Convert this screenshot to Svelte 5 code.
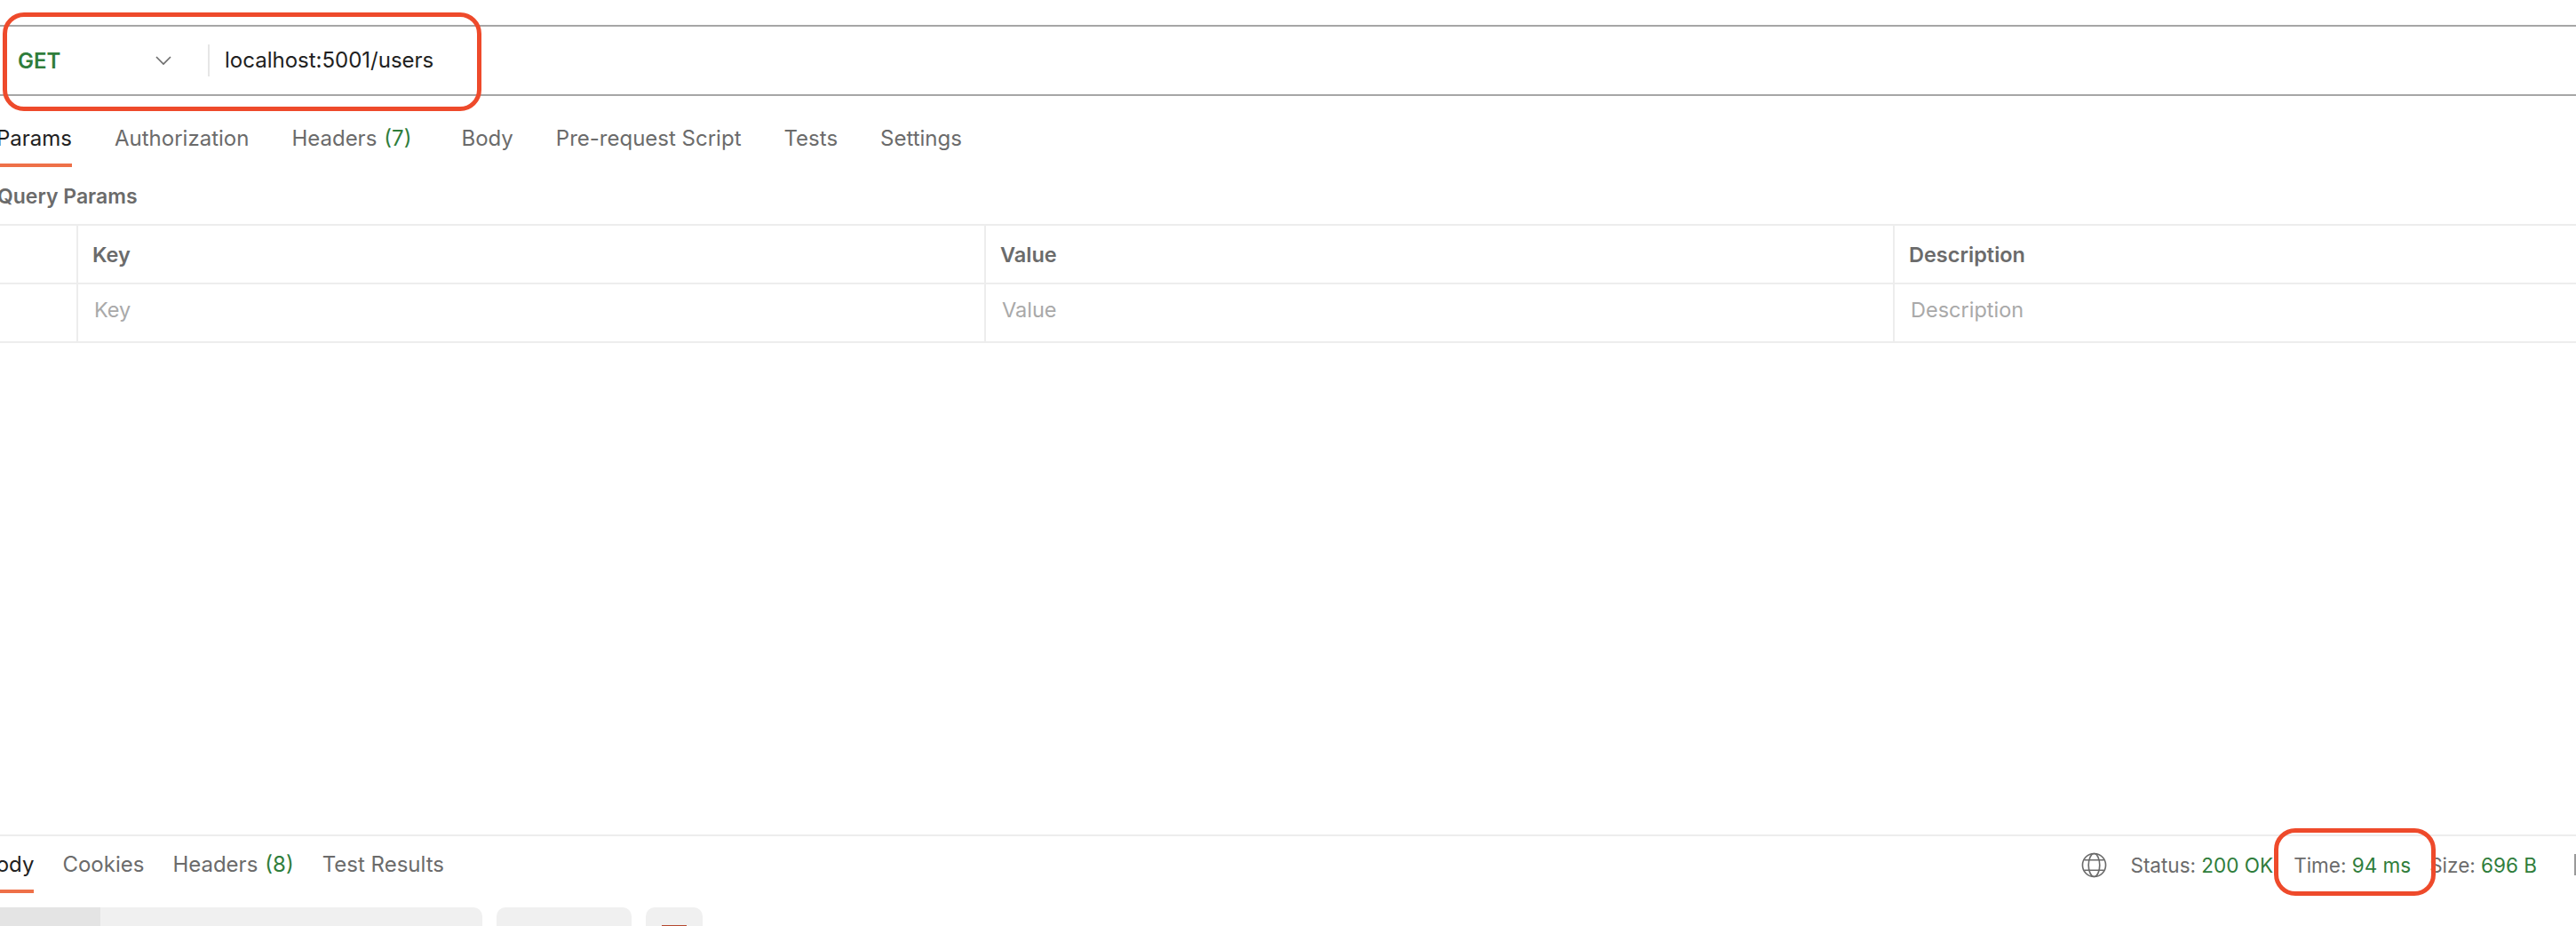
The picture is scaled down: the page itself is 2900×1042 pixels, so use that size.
<script>
  const reqTabs = [
    { label: 'Params', active: true },
    { label: 'Authorization' },
    { label: 'Headers', count: '(7)' },
    { label: 'Body' },
    { label: 'Pre-request Script' },
    { label: 'Tests' },
    { label: 'Settings' }
  ];
  const resTabs = [
    { label: 'Body', active: true },
    { label: 'Cookies' },
    { label: 'Headers', count: '(8)' },
    { label: 'Test Results' }
  ];
</script>

<div class="page">
  <div class="urlbar">
    <div class="method">
      <span class="verb">GET</span>
      <svg class="chev" width="18" height="11" viewBox="0 0 18 11"><path d="M1 1l8 8 8-8" fill="none" stroke="#6b6b6b" stroke-width="1.6"/></svg>
    </div>
    <div class="url">localhost:5001/users</div>
    <div class="mark mark-url"></div>
  </div>

  <nav class="tabs req">
    {#each reqTabs as t}
      <span class="tab" class:active={t.active}>{t.label}{#if t.count}<span class="count">{t.count}</span>{/if}</span>
    {/each}
  </nav>

  <div class="qp">Query Params</div>

  <div class="table">
    <div class="row head">
      <div class="c0"></div><div class="c1">Key</div><div class="c2">Value</div><div class="c3">Description</div>
    </div>
    <div class="row ph">
      <div class="c0"></div><div class="c1">Key</div><div class="c2">Value</div><div class="c3">Description</div>
    </div>
  </div>

  <div class="spacer"></div>

  <div class="response">
    <nav class="tabs res">
      {#each resTabs as t}
        <span class="tab" class:active={t.active}>{t.label}{#if t.count}<span class="count">{t.count}</span>{/if}</span>
      {/each}
    </nav>
    <div class="stats">
      <svg class="globe" width="29" height="29" viewBox="0 0 30 30" fill="none" stroke="#6b6b6b" stroke-width="1.7">
        <circle cx="15" cy="15" r="13.5"/>
        <ellipse cx="15" cy="15" rx="6.5" ry="13.5"/>
        <path d="M3.5 9h23M3.5 21h23"/>
      </svg>
      <span class="stat s1">Status: <b>200 OK</b></span>
      <span class="stat s2">Time: <b>94 ms</b></span>
      <span class="stat s3">Size: <b>696 B</b></span>
      <span class="edge"></span>
    </div>
    <div class="mark mark-time"></div>
  </div>

  <div class="toolbar">
    <div class="seg one">
      <span class="view on">Pretty</span>
      <span class="view raw">Raw</span>
      <span class="view prev">Preview</span>
      <span class="view vis">Visualize</span>
    </div>
    <div class="seg two"></div>
    <div class="seg three"><span class="wrap"></span></div>
  </div>
</div>

<style>
  :global(body) { margin: 0; background: #fff; }
  .page {
    width: 2900px; height: 1042px; overflow: hidden; display: flex; flex-direction: column;
    font-family: Inter, "Liberation Sans", sans-serif; font-size: 24px; color: #212121; position: relative;
  }
  .urlbar {
    margin-top: 28px; height: 80px; box-sizing: border-box; display: flex; align-items: center;
    border-top: 2px solid #a6a6a6; border-bottom: 2px solid #a6a6a6; position: relative; flex: none;
  }
  .method { width: 234px; height: 36px; box-sizing: border-box; padding-left: 20px; padding-right: 41px; display: flex; align-items: center; justify-content: space-between; }
  .verb { color: #2f7d3b; font-weight: 600; font-size: 24px; }
  .url { height: 36px; line-height: 36px; border-left: 2px solid #e6e6e6; padding-left: 17px; font-size: 24px; }
  .mark { position: absolute; border: 5px solid #ee4a2b; box-sizing: border-box; border-radius: 24px; }
  .mark-url { left: 3px; top: -16px; width: 539px; height: 111px; }

  .tabs { display: flex; }
  .tab { color: #6b6b6b; position: relative; white-space: nowrap; line-height: 32px; }
  .tab.active { color: #212121; }
  .tab.active::after { content: ''; position: absolute; left: 0; right: 0; top: 44px; height: 4px; background: #ee7048; }
  .count { color: #2f7d3b; margin-left: 8px; }
  .req { height: 80px; box-sizing: border-box; flex: none; padding-top: 32px; gap: 48px; margin-left: -4px; align-items: flex-start; }
  .req .tab:nth-child(4) { margin-left: 8px; }

  .qp { font-weight: 600; color: #6b6b6b; margin-left: -3px; height: 60px; line-height: 66px; font-size: 23px; flex: none; }

  .table { margin-top: 4px; border-top: 2px solid #ededed; flex: none; }
  .row { display: grid; grid-template-columns: 88px 1022px 1023px 1fr; height: 66px; border-bottom: 2px solid #ededed; box-sizing: border-box; }
  .row > div { border-right: 2px solid #ededed; }
  .row > div:last-child { border-right: 0; }
  .head > div { padding-left: 16px; line-height: 66px; }
  .ph > div { padding-left: 18px; line-height: 58px; }
  .row > .c0 { padding: 0; }
  .head { font-weight: 600; color: #6b6b6b; font-size: 23.5px; }
  .ph { color: #a9a9a9; font-size: 23.5px; }

  .spacer { flex: 1; }
  .response { display: flex; justify-content: space-between; height: 82px; flex: none; border-top: 2px solid #ededed; position: relative; box-sizing: border-box; }
  .res { gap: 32px; margin-left: -20px; align-items: flex-start; padding-top: 16px; }
  .stats { display: flex; align-items: center; color: #6b6b6b; font-size: 22.5px; padding-bottom: 16px; }
  .stat { white-space: nowrap; }
  .stat b { font-weight: 400; color: #2f7d3b; }
  .globe { margin-right: 26px; }
  .s1 { margin-right: 23px; }
  .s2 { margin-right: 21px; }
  .edge { width: 2px; height: 24px; background: #9a9a9a; margin-left: 42px; }
  .mark-time { left: 2560px; top: -9px; width: 182px; height: 76px; }

  .toolbar { display: flex; gap: 16px; height: 21px; flex: none; }
  .seg { width: 543px; background: #f0f0f0; border-radius: 0 10px 0 0; overflow: hidden; }
  .one { display: grid; grid-template-columns: 113px 111px 152px 1fr; }
  .view { display: block; padding-top: 17px; line-height: 30px; color: #6b6b6b; white-space: nowrap; }
  .on { background: #e4e4e4; color: #212121; padding-left: 14px; }
  .raw { padding-left: 34px; }
  .prev { padding-left: 35px; }
  .vis { padding-left: 35px; }
  .two { width: 152px; border-radius: 10px 10px 0 0; }
  .three { width: 64px; border-radius: 10px 10px 0 0; position: relative; }
  .wrap { position: absolute; left: 18px; top: 20px; width: 28px; height: 1px; background: #b5482f; }
</style>
